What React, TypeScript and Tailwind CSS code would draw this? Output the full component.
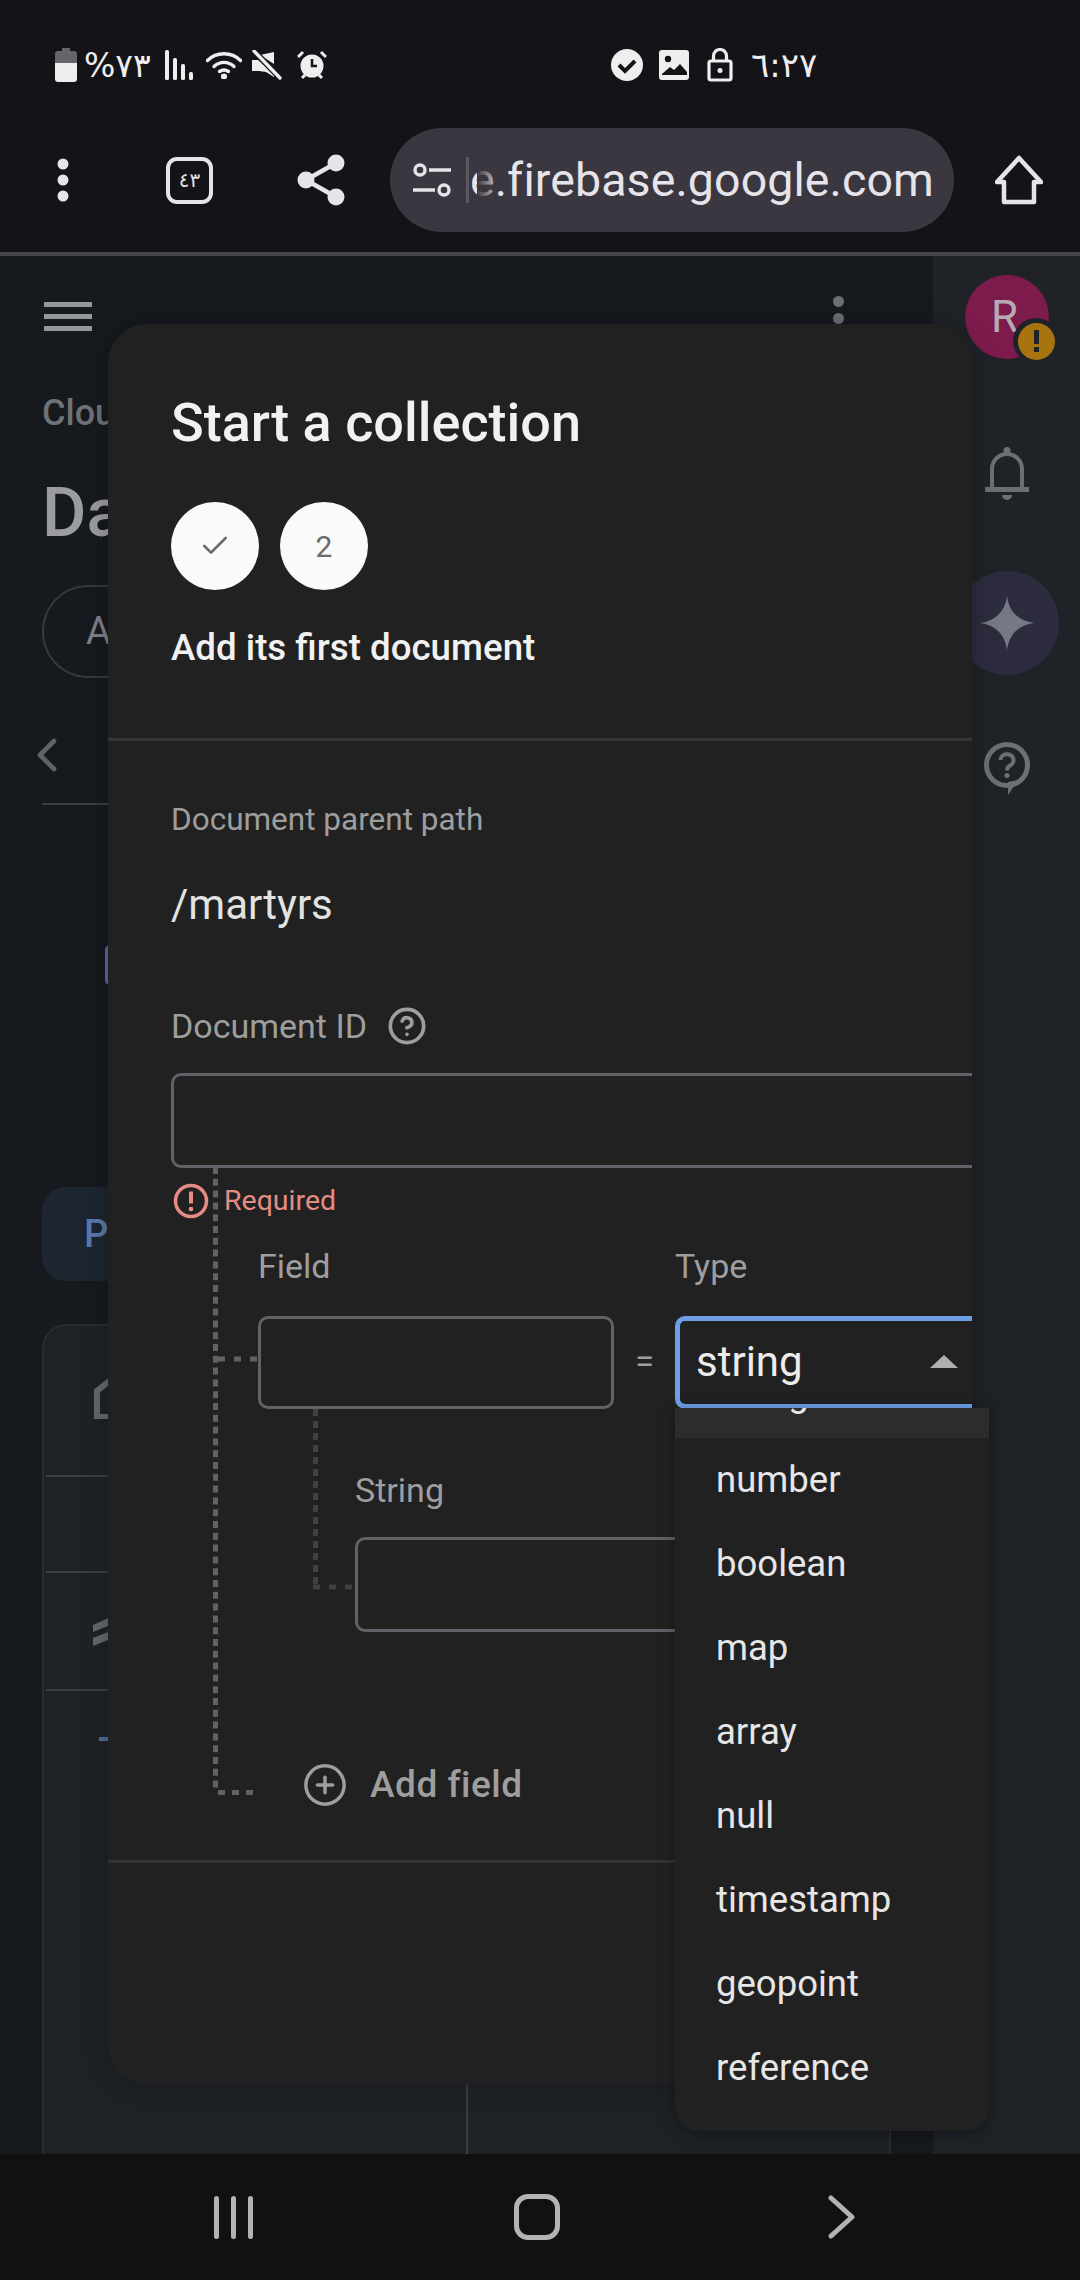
import { Check, ChevronLeft, CircleHelp, CirclePlus } from 'lucide-react'

const TYPE_OPTIONS = ['number', 'boolean', 'map', 'array', 'null', 'timestamp', 'geopoint', 'reference']

function StatusLeft() {
  return (
    <div className="flex items-center">
      <svg width="22" height="34" viewBox="0 0 22 34" className="ml-[55px]">
        <path d="M7 0h8v3h4a3 3 0 0 1 3 3v9H0V6a3 3 0 0 1 3-3h4z" fill="#65636b" />
        <path d="M0 15h22v16a3 3 0 0 1-3 3H3a3 3 0 0 1-3-3z" fill="#eeeeee" />
      </svg>
      <span className="ml-[7px] w-[66px] text-[33px] leading-none text-[#eeeeee] font-['DejaVu_Sans',sans-serif] tracking-[-2px] whitespace-nowrap">%٧٣</span>
      <svg width="28" height="30" viewBox="0 0 28 30" className="ml-[15px]" fill="#eeeeee">
        <rect x="0" y="0" width="4" height="30" rx="1.5" />
        <rect x="8" y="8" width="4" height="22" rx="1.5" />
        <rect x="16" y="14" width="4" height="16" rx="1.5" />
        <rect x="24" y="22" width="4" height="8" rx="1.5" />
      </svg>
      <svg width="36" height="28" viewBox="0 0 36 28" className="ml-[13px]" fill="none" stroke="#eeeeee" strokeWidth="3.4" strokeLinecap="round">
        <path d="M1.5 9.5C10.5 .5 25.5 .5 34.5 9.5" />
        <path d="M8 15.5c5.800-5.500 14.200-5.500 20 0" />
        <path d="M13.500 20.500c2.800-2 6.200-2 9 0" />
        <circle cx="18" cy="25.500" r="1.400" fill="#eeeeee" />
      </svg>
      <svg width="30" height="30" viewBox="0 0 30 30" className="ml-[10px]" fill="#eeeeee">
        <path d="M22 2v12L8 5l0 0zM0 10h6l16 14v3l-8-5-7-1H0z" />
        <path d="M2 1l26 27" stroke="#141318" strokeWidth="6" />
        <path d="M2 1l26 27" stroke="#eeeeee" strokeWidth="3.400" strokeLinecap="round" />
      </svg>
      <svg width="30" height="30" viewBox="0 0 30 30" className="ml-[15px]">
        <circle cx="15" cy="16" r="11.500" fill="#eeeeee" />
        <path d="M15 9v7h5" fill="none" stroke="#141318" strokeWidth="2.500" />
        <path d="M1 7l5-5M29 7l-5-5M5 28l3-3M25 28l-3-3" stroke="#eeeeee" strokeWidth="3" />
      </svg>
    </div>
  )
}

function StatusRight() {
  return (
    <div className="flex items-center ml-[283px]">
      <svg width="34" height="34" viewBox="0 0 34 34">
        <circle cx="17" cy="17" r="16" fill="#eeeeee" />
        <path d="M9 17l6 6 10-10" fill="none" stroke="#141318" strokeWidth="4" />
      </svg>
      <svg width="30" height="30" viewBox="0 0 30 30" className="ml-[15px]">
        <rect width="30" height="30" rx="3" fill="#eeeeee" />
        <circle cx="9" cy="9" r="3.200" fill="#141318" />
        <path d="M3 24l8-7 4 3 6-6 7 8v3H3z" fill="#141318" />
      </svg>
      <svg width="26" height="34" viewBox="0 0 26 34" className="ml-[18px]" fill="none" stroke="#eeeeee" strokeWidth="3.200">
        <rect x="2" y="13" width="22" height="19" rx="2" />
        <path d="M6.500 13V8a6.500 6.500 0 0 1 13 0v5" />
        <circle cx="13" cy="22.500" r="2.500" fill="#eeeeee" stroke="none" />
      </svg>
      <span className="ml-[18px] text-[34px] leading-none text-[#eeeeee] font-['DejaVu_Sans',sans-serif] tracking-[-2px] whitespace-nowrap">٦:٢٧</span>
    </div>
  )
}

function BrowserBar() {
  return (
    <div className="flex items-center h-[104px] mt-[46px]">
      <svg width="12" height="44" viewBox="0 0 12 44" className="ml-[57px]" fill="#e6e4ea">
        <circle cx="6" cy="6" r="5.500" />
        <circle cx="6" cy="22" r="5.500" />
        <circle cx="6" cy="38" r="5.500" />
      </svg>
      <div className="ml-[97px] w-[47px] h-[47px] rounded-[11px] border-[4px] border-[#e6e4ea] flex items-center justify-center text-[20px] leading-none text-[#e6e4ea] font-['DejaVu_Sans',sans-serif] tracking-[-1px]">٤٣</div>
      <svg width="48" height="52" viewBox="0 0 48 52" className="ml-[84px]" fill="#e6e4ea">
        <circle cx="39" cy="9" r="8.500" />
        <circle cx="9" cy="26" r="8.500" />
        <circle cx="39" cy="43" r="8.500" />
        <path d="M39 9L9 26l30 17" fill="none" stroke="#e6e4ea" strokeWidth="4.500" strokeLinejoin="round" />
      </svg>
      <div className="ml-[45px] w-[564px] h-[104px] rounded-[52px] bg-[#3a3740] flex items-center relative overflow-hidden">
        <svg width="40" height="36" viewBox="0 0 40 36" className="ml-[23px]" fill="none" stroke="#e6e4ea" strokeWidth="3.400">
          <circle cx="7" cy="8" r="5" />
          <path d="M16 8h22M0 28h22" />
          <circle cx="31" cy="28" r="5" />
        </svg>
        <div className="ml-[13px] w-[3px] h-[46px] bg-[#5b5860]" />
        <span className="ml-[1px] text-[46.500px] leading-none tracking-[0.1px] text-[#e6e4ea] font-['Roboto',sans-serif] whitespace-nowrap">e.firebase.google.com</span>
        <div className="absolute left-[87px] top-0 w-[24px] h-full bg-gradient-to-r from-[#3a3740] to-transparent" />
      </div>
      <svg width="48" height="50" viewBox="0 0 48 50" className="ml-[41px]" fill="none" stroke="#e6e4ea" strokeWidth="4.500" strokeLinejoin="round">
        <path d="M24 3L2 27h7v20h30V27h7z" />
      </svg>
    </div>
  )
}

function PageBehind() {
  return (
    <div className="flex-1 flex min-h-0 bg-[#14171b]">
      <div className="w-[933px] flex flex-col pl-[42px] overflow-hidden bg-[#16191e]">
        <div className="flex items-center justify-between h-[34px] mt-[43px] shrink-0">
          <div className="ml-[2px] flex flex-col gap-[7px] w-[48px]">
            <div className="h-[5px] bg-[#94979c]" />
            <div className="h-[5px] bg-[#94979c]" />
            <div className="h-[5px] bg-[#94979c]" />
          </div>
          <div className="mr-[89px] flex flex-col gap-[6px] -mt-[12px]">
            <div className="w-[11px] h-[11px] rounded-full bg-[#6c7075]" />
            <div className="w-[11px] h-[11px] rounded-full bg-[#6c7075]" />
          </div>
        </div>
        <div className="mt-[59px] text-[36px] leading-[42px] font-medium text-[#6e7176] font-['Roboto',sans-serif]">Clou</div>
        <div className="mt-[37px] text-[68px] leading-[84px] font-medium text-[#9a9ca0] font-['Roboto',sans-serif]">Da</div>
        <div className="mt-[30px] w-[120px] h-[93px] shrink-0 rounded-l-[46px] border-2 border-r-0 border-[#35393e] flex items-center pl-[42px] text-[38px] text-[#7d8085] font-['Roboto',sans-serif]">A</div>
        <ChevronLeft size={56} strokeWidth={2} className="mt-[49px] -ml-[23px] shrink-0 text-[#5f6367]" />
        <div className="mt-[20px] h-[2px] shrink-0 bg-[#3a3d42]" />
        <div className="mt-[140px] ml-[63px] w-[5px] h-[40px] shrink-0 rounded-l-full border-l-[4px] border-[#4a6c9c]" />
        <div className="mt-[202px] w-[120px] h-[94px] shrink-0 rounded-[24px] bg-[#1c2530] flex items-center pl-[42px] text-[38px] font-medium text-[#5878a8] font-['Roboto',sans-serif]">P</div>
        <div className="mt-[43px] w-[849px] flex-1 rounded-t-[24px] border-2 border-b-0 border-[#282c31] bg-[#1e2226] flex flex-col relative">
          <div className="h-[151px] border-b-2 border-[#3a3d42] mx-[2px] flex items-center pl-[48px]">
            <svg width="36" height="44" viewBox="0 0 36 44" className="-mt-[8px]" fill="none" stroke="#63676b" strokeWidth="6">
              <path d="M3 42V16L18 4l15 12v26z" />
            </svg>
          </div>
          <div className="h-[96px] border-b-2 border-[#3a3d42] mx-[2px]" />
          <div className="h-[118px] border-b-2 border-[#3a3d42] mx-[2px] flex items-center pl-[47px]">
            <svg width="20" height="30" viewBox="0 0 20 30" fill="#63676b">
              <path d="M0 9l20-9v8L0 16zM0 22l20-8v8L0 30z" />
            </svg>
          </div>
          <div className="mt-[46px] ml-[55px] w-[12px] h-[4px] bg-[#4a6c9c]" />
          <div className="absolute left-[422px] top-[700px] bottom-0 w-[2px] bg-[#3a3d42]" />
        </div>
      </div>
      <div className="flex-1 flex flex-col items-center bg-[#1f2328] relative">
        <div className="absolute left-[32px] top-[19px] w-[84px] h-[84px] rounded-full bg-[#7d1b4c] flex items-center justify-center pr-[5px] text-[44px] text-[#b7aab3] font-['Roboto',sans-serif]">
          R
        </div>
        <div className="absolute left-[80px] top-[62px] w-[46px] h-[46px] rounded-full bg-[#1f2328] flex items-center justify-center">
          <div className="w-[37px] h-[37px] rounded-full bg-[#a87410] flex flex-col items-center justify-center gap-[3px]">
            <div className="w-[5px] h-[14px] bg-[#1f2328]" />
            <div className="w-[5px] h-[5px] bg-[#1f2328]" />
          </div>
        </div>
        <svg width="44" height="54" viewBox="0 0 44 54" className="mt-[191px]" fill="none" stroke="#6c7075" strokeWidth="4">
          <circle cx="22" cy="3.500" r="3.500" fill="#6c7075" stroke="none" />
          <path d="M7 42V22a15 15 0 0 1 30 0v20" />
          <path d="M0 42.500h44" strokeWidth="5" />
          <path d="M17 48h10a5 5 0 0 1-10 0z" fill="#6c7075" stroke="none" />
        </svg>
        <div className="mt-[70px] w-[104px] h-[104px] shrink-0 rounded-full bg-[#2c2c3e] flex items-center justify-center">
          <svg width="54" height="54" viewBox="0 0 54 54" fill="#767983">
            <path d="M27 0c2 16 12 25 27 27-15 2-25 11-27 27-2-16-12-25-27-27 15-2 25-11 27-27z" />
          </svg>
        </div>
        <svg width="46" height="54" viewBox="0 0 46 54" className="mt-[67px]" fill="none" stroke="#6c7075" strokeWidth="5">
          <circle cx="23" cy="23" r="20.500" />
          <path d="M24 40l10-2-10 15z" fill="#6c7075" stroke="none" />
          <path d="M16.500 18a6.500 6 0 1 1 9.500 5.500c-2.500 1.500-3 2.500-3 5" strokeWidth="4" />
          <circle cx="23" cy="33.500" r="2.500" fill="#6c7075" stroke="none" />
        </svg>
      </div>
    </div>
  )
}

function Connectors() {
  return (
    <svg width="220" height="1100" viewBox="0 0 220 1100" className="absolute left-[101px] top-[840px]" fill="none" strokeWidth="5">
      <path d="M6.500 3V625" stroke="#5f6368" strokeDasharray="7 4.800" />
      <path d="M9 195h40" stroke="#5f6368" strokeDasharray="7 9" />
      <path d="M9 628.500h40" stroke="#5f6368" strokeDasharray="7 7" />
      <path d="M106.500 245V420" stroke="#3f4145" strokeDasharray="7 5" />
      <path d="M104 423h40" stroke="#3f4145" strokeDasharray="7 9" />
    </svg>
  )
}

function CollectionDialog() {
  return (
    <div className="absolute left-[108px] top-[324px] w-[864px] h-[1760px] rounded-[40px] bg-[#212121] shadow-[0_0_24px_rgba(0,0,0,0.25)] overflow-hidden font-['Roboto',sans-serif]">
      <div className="h-[417px] border-b-[3px] border-[#333435] pl-[63px] pt-[70px]">
        <h2 className="text-[54px] leading-[58px] font-medium text-[#f1f1f1]">Start a collection</h2>
        <div className="flex gap-[21px] mt-[50px]">
          <div className="w-[88px] h-[88px] rounded-full bg-[#fafafa] flex items-center justify-center text-[#6b6b6b]">
            <Check size={32} strokeWidth={2} />
          </div>
          <div className="w-[88px] h-[88px] rounded-full bg-[#fafafa] flex items-center justify-center text-[30px] text-[#6b6b6b]">2</div>
        </div>
        <div className="mt-[37px] text-[36.700px] leading-[42px] font-medium text-[#f1f1f1]">Add its first document</div>
      </div>

      <div className="pl-[63px]">
        <div className="mt-[60px] text-[31.500px] leading-[38px] text-[#9e9e9e]">Document parent path</div>
        <div className="mt-[41px] text-[42px] leading-[50px] text-[#e3e3e3]">/martyrs</div>
        <div className="mt-[76px] flex items-center h-[40px]">
          <span className="text-[34px] text-[#9e9e9e]">Document ID</span>
          <CircleHelp size={40} strokeWidth={2.2} className="ml-[20px] text-[#9e9e9e]" />
        </div>
        <div className="mt-[27px] h-[95px] w-[900px] rounded-[10px] border-[3px] border-[#5f6368]" />
        <div className="mt-[14px] flex items-center h-[38px] text-[#e58d85]">
          <svg width="36" height="36" viewBox="0 0 36 36" fill="none" stroke="currentColor" strokeWidth="3.500" className="ml-[2px]">
            <circle cx="18" cy="18" r="15.500" />
            <path d="M18 8.500v12" strokeWidth="4" />
            <circle cx="18" cy="26" r="2.300" fill="currentColor" stroke="none" />
          </svg>
          <span className="ml-[15px] text-[28.500px] leading-none">Required</span>
        </div>

        <div className="ml-[87px] mt-[26px] flex items-start">
          <div className="shrink-0">
            <div className="text-[34px] leading-[40px] text-[#9e9e9e]">Field</div>
            <div className="mt-[30px] w-[356px] h-[93px] rounded-[10px] border-[3px] border-[#5f6368]" />
          </div>
          <div className="shrink-0 w-[61px] text-center mt-[95px] text-[34px] leading-[40px] text-[#9e9e9e]">=</div>
          <div className="shrink-0">
            <div className="text-[34px] leading-[40px] text-[#9e9e9e]">Type</div>
            <div className="mt-[30px] w-[400px] h-[93px] rounded-[10px] border-[5px] border-[#6f9fe8] flex items-center pl-[16px] pb-[2px] text-[42px] text-[#ececec]">
              <span className="w-[234px]">string</span>
              <div className="w-0 h-0 border-l-[14px] border-r-[14px] border-b-[13px] border-l-transparent border-r-transparent border-b-[#b0b0b0]" />
            </div>
          </div>
        </div>

        <div className="ml-[184px] mt-[61px] text-[34px] leading-[40px] text-[#9e9e9e]">String</div>
        <div className="ml-[184px] mt-[27px] w-[600px] h-[95px] rounded-[10px] border-[3px] border-[#5f6368]" />

        <div className="ml-[131px] mt-[131px] flex items-center h-[44px] text-[#9e9e9e]">
          <CirclePlus size={46} strokeWidth={1.800} />
          <span className="ml-[22px] text-[37px] font-medium tracking-[0.5px]">Add field</span>
        </div>
      </div>

      <div className="mt-[53px] border-t-[3px] border-[#333435]" />
      <Connectors />
    </div>
  )
}

function TypeDropdown() {
  return (
    <div className="absolute left-[675px] top-[1408px] w-[314px] h-[723px] rounded-b-[24px] bg-[#212121] shadow-[0_4px_16px_rgba(0,0,0,0.35)] overflow-hidden font-['Roboto',sans-serif]">
      <div className="h-[30px] bg-[#2c2c2c] overflow-hidden relative">
        <span className="absolute left-[41px] -top-[39px] text-[36.500px] leading-[50px] text-[#e6e6e6]">string</span>
      </div>
      {TYPE_OPTIONS.map((option) => (
        <div key={option} className="h-[84px] flex items-center pl-[41px] text-[36.500px] leading-none text-[#e6e6e6]">
          {option}
        </div>
      ))}
    </div>
  )
}

export default function App() {
  return (
    <div className="relative w-[1080px] h-[2280px] flex flex-col overflow-hidden bg-[#111111]">
      <header className="h-[256px] shrink-0 bg-[#141318] border-b-[4px] border-[#47464c]">
        <div className="flex items-center justify-start pt-[48px]">
          <StatusLeft />
          <StatusRight />
        </div>
        <BrowserBar />
      </header>

      <PageBehind />

      <nav className="h-[126px] shrink-0 bg-[#111111] flex items-center pl-[214px]">
        <div className="flex gap-[12px] w-[300px]">
          <div className="w-[5px] h-[43px] rounded-full bg-[#b3b3b3]" />
          <div className="w-[5px] h-[43px] rounded-full bg-[#b3b3b3]" />
          <div className="w-[5px] h-[43px] rounded-full bg-[#b3b3b3]" />
        </div>
        <div className="w-[46px] h-[46px] rounded-[14px] border-[5px] border-[#b3b3b3]" />
        <svg width="28" height="44" viewBox="0 0 28 44" className="ml-[268px]" fill="none" stroke="#b3b3b3" strokeWidth="5" strokeLinecap="round" strokeLinejoin="round">
          <path d="M3 3l21 19L3 41" />
        </svg>
      </nav>

      <CollectionDialog />
      <TypeDropdown />
    </div>
  )
}
